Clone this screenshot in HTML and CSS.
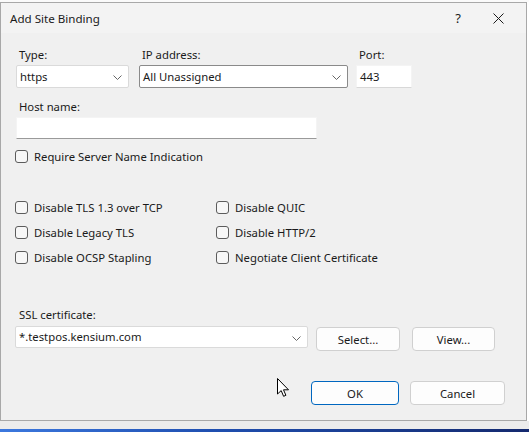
FILE: index.html
```html
<!DOCTYPE html>
<html lang="en">
<head>
    <meta charset="UTF-8">
    <title>Add Site Binding</title>
    <link rel="stylesheet" href="styles.css">
</head>
<body>
    <div class="screen">
        <div class="dialog">
            <!-- Barra del titolo -->
            <div class="titlebar">
                <span class="title">Add Site Binding</span>
                <span class="help">?</span>
                <span class="close">
                    <svg width="11" height="11" viewBox="0 0 11 11"><path d="M0.5 0.5 L10.5 10.5 M10.5 0.5 L0.5 10.5" stroke="#1a1a1a" stroke-width="1"/></svg>
                </span>
            </div>

            <div class="content">
                <!-- Tipo, IP, porta -->
                <div class="row-fields">
                    <div class="field field-type">
                        <label>Type:</label>
                        <div class="combo">https
                            <svg class="chevron" width="9" height="5" viewBox="0 0 9 5"><path d="M0.5 0.5 L4.5 4.5 L8.5 0.5" fill="none" stroke="#666" stroke-width="1"/></svg>
                        </div>
                    </div>
                    <div class="field field-ip">
                        <label>IP address:</label>
                        <div class="combo combo-dark">All Unassigned
                            <svg class="chevron" width="9" height="5" viewBox="0 0 9 5"><path d="M0.5 0.5 L4.5 4.5 L8.5 0.5" fill="none" stroke="#666" stroke-width="1"/></svg>
                        </div>
                    </div>
                    <div class="field field-port">
                        <label>Port:</label>
                        <div class="textbox">443</div>
                    </div>
                </div>

                <div class="field field-host">
                    <label>Host name:</label>
                    <div class="textbox textbox-line"></div>
                </div>

                <div class="check check-sni"><span class="box"></span>Require Server Name Indication</div>

                <!-- Opzioni TLS -->
                <div class="check-grid">
                    <div class="check"><span class="box"></span>Disable TLS 1.3 over TCP</div>
                    <div class="check"><span class="box"></span>Disable QUIC</div>
                    <div class="check"><span class="box"></span>Disable Legacy TLS</div>
                    <div class="check"><span class="box"></span>Disable HTTP/2</div>
                    <div class="check"><span class="box"></span>Disable OCSP Stapling</div>
                    <div class="check"><span class="box"></span>Negotiate Client Certificate</div>
                </div>

                <!-- Certificato -->
                <div class="field field-ssl">
                    <label>SSL certificate:</label>
                    <div class="ssl-row">
                        <div class="combo combo-ssl">*.testpos.kensium.com
                            <svg class="chevron" width="9" height="5" viewBox="0 0 9 5"><path d="M0.5 0.5 L4.5 4.5 L8.5 0.5" fill="none" stroke="#666" stroke-width="1"/></svg>
                        </div>
                        <button class="btn btn-select">Select...</button>
                        <button class="btn btn-view">View...</button>
                    </div>
                </div>

                <div class="actions">
                    <button class="btn btn-ok">OK</button>
                    <button class="btn btn-cancel">Cancel</button>
                </div>
            </div>
        </div>
        <div class="desk-edge"></div>

        <!-- Puntatore del mouse -->
        <svg class="cursor" width="13" height="20" viewBox="0 0 13 20">
            <path d="M0.5 0.5 L0.5 16 L4.2 12.6 L6.6 18.3 L8.9 17.3 L6.5 11.8 L11.5 11.8 Z" fill="#fff" stroke="#000" stroke-width="1" stroke-linejoin="round"/>
        </svg>
    </div>
    <div class="below"></div>
    <div class="taskbar"></div>
</body>
</html>
```

FILE: styles.css
```css
/* Pagina */
body {
    margin: 0;
    background-color: #fafafa;
    font-family: 'Segoe UI', 'Noto Sans', sans-serif;
    font-size: 11.3px;
    color: #1a1a1a;
}
.screen {
    position: relative;
    display: flex;
    padding-top: 2px;
}
.dialog {
    width: 527px;
    height: 419px;
    box-sizing: border-box;
    border: 1px solid #a8a8a8;
    background-color: #f0f0f0;
    display: flex;
    flex-direction: column;
}
.desk-edge {
    flex: 1;
    background-color: #fff;
}

/* Barra del titolo */
.titlebar {
    height: 30px;
    display: flex;
    align-items: center;
    background-color: #f3f3f3;
    padding-left: 9px;
    padding-right: 8px;
}
.title {
    flex: 1;
    font-size: 11.6px;
}
.help,
.close {
    width: 40px;
    display: flex;
    justify-content: center;
    align-items: center;
    font-size: 13px;
}

/* Contenuto */
.content {
    padding: 14px 20px 0 15px;
}
.field label {
    display: block;
    height: 16px;
    line-height: 16px;
    padding-left: 3px;
    margin-bottom: 2px;
}
.row-fields {
    display: flex;
}
.field-type {
    width: 113px;
    margin-right: 10px;
}
.field-ip {
    width: 209px;
    margin-right: 8px;
}
.field-port {
    width: 56px;
}
.combo {
    position: relative;
    height: 23px;
    box-sizing: border-box;
    border: 1px solid #dadada;
    border-radius: 2px;
    background-color: #fff;
    line-height: 21px;
    padding-left: 3px;
}
.combo-dark {
    border-color: #8a8a8a;
}
.chevron {
    position: absolute;
    right: 6px;
    top: 9px;
}
.textbox {
    height: 23px;
    box-sizing: border-box;
    background-color: #fff;
    border: 1px solid #f4f4f4;
    border-bottom-color: #d8d8d8;
    line-height: 21px;
    padding-left: 3px;
}
.field-host {
    margin-top: 11px;
    width: 301px;
}
.textbox-line {
    height: 22px;
    border-bottom-color: #9a9a9a;
}

/* Caselle di controllo */
.check {
    display: flex;
    align-items: center;
    height: 16px;
    margin-left: -1px;
}
.box {
    width: 13px;
    height: 13px;
    box-sizing: border-box;
    border: 1px solid #5c5c5c;
    border-radius: 3px;
    background-color: #f7f7f7;
    margin-right: 6px;
}
.check-sni {
    margin-top: 9px;
}
.check-grid {
    display: grid;
    grid-template-columns: 201px auto;
    row-gap: 9px;
    margin-top: 35px;
}

/* Certificato */
.field-ssl {
    margin-top: 42px;
}
.field-ssl label {
    margin-bottom: 3px;
}
.ssl-row {
    display: flex;
    align-items: flex-start;
    margin-left: -1px;
}
.combo-ssl {
    width: 293px;
    height: 22px;
    line-height: 20px;
}

/* Pulsanti */
.btn {
    font-family: 'Segoe UI', 'Noto Sans', sans-serif;
    font-size: 11.3px;
    color: #1a1a1a;
    background-color: #fdfdfd;
    border: 1px solid #d0d0d0;
    border-radius: 4px;
    height: 24px;
    padding: 0;
}
.btn-select {
    width: 84px;
    margin-left: 8px;
    margin-top: 1px;
}
.btn-view {
    width: 83px;
    margin-left: 12px;
    margin-top: 1px;
}
.actions {
    display: flex;
    justify-content: flex-end;
    margin-top: 30px;
    margin-right: 1px;
}
.btn-ok {
    width: 88px;
    border-color: #0067c0;
}
.btn-cancel {
    width: 95px;
    margin-left: 11px;
}

/* Puntatore */
.cursor {
    position: absolute;
    left: 277px;
    top: 378px;
}

/* Desktop sotto la finestra */
.below {
    height: 8px;
    background-color: #ececec;
}
.taskbar {
    height: 4px;
    background: linear-gradient(to right, #3c78de, #1f4fb0 40%, #14296e);
}
```
